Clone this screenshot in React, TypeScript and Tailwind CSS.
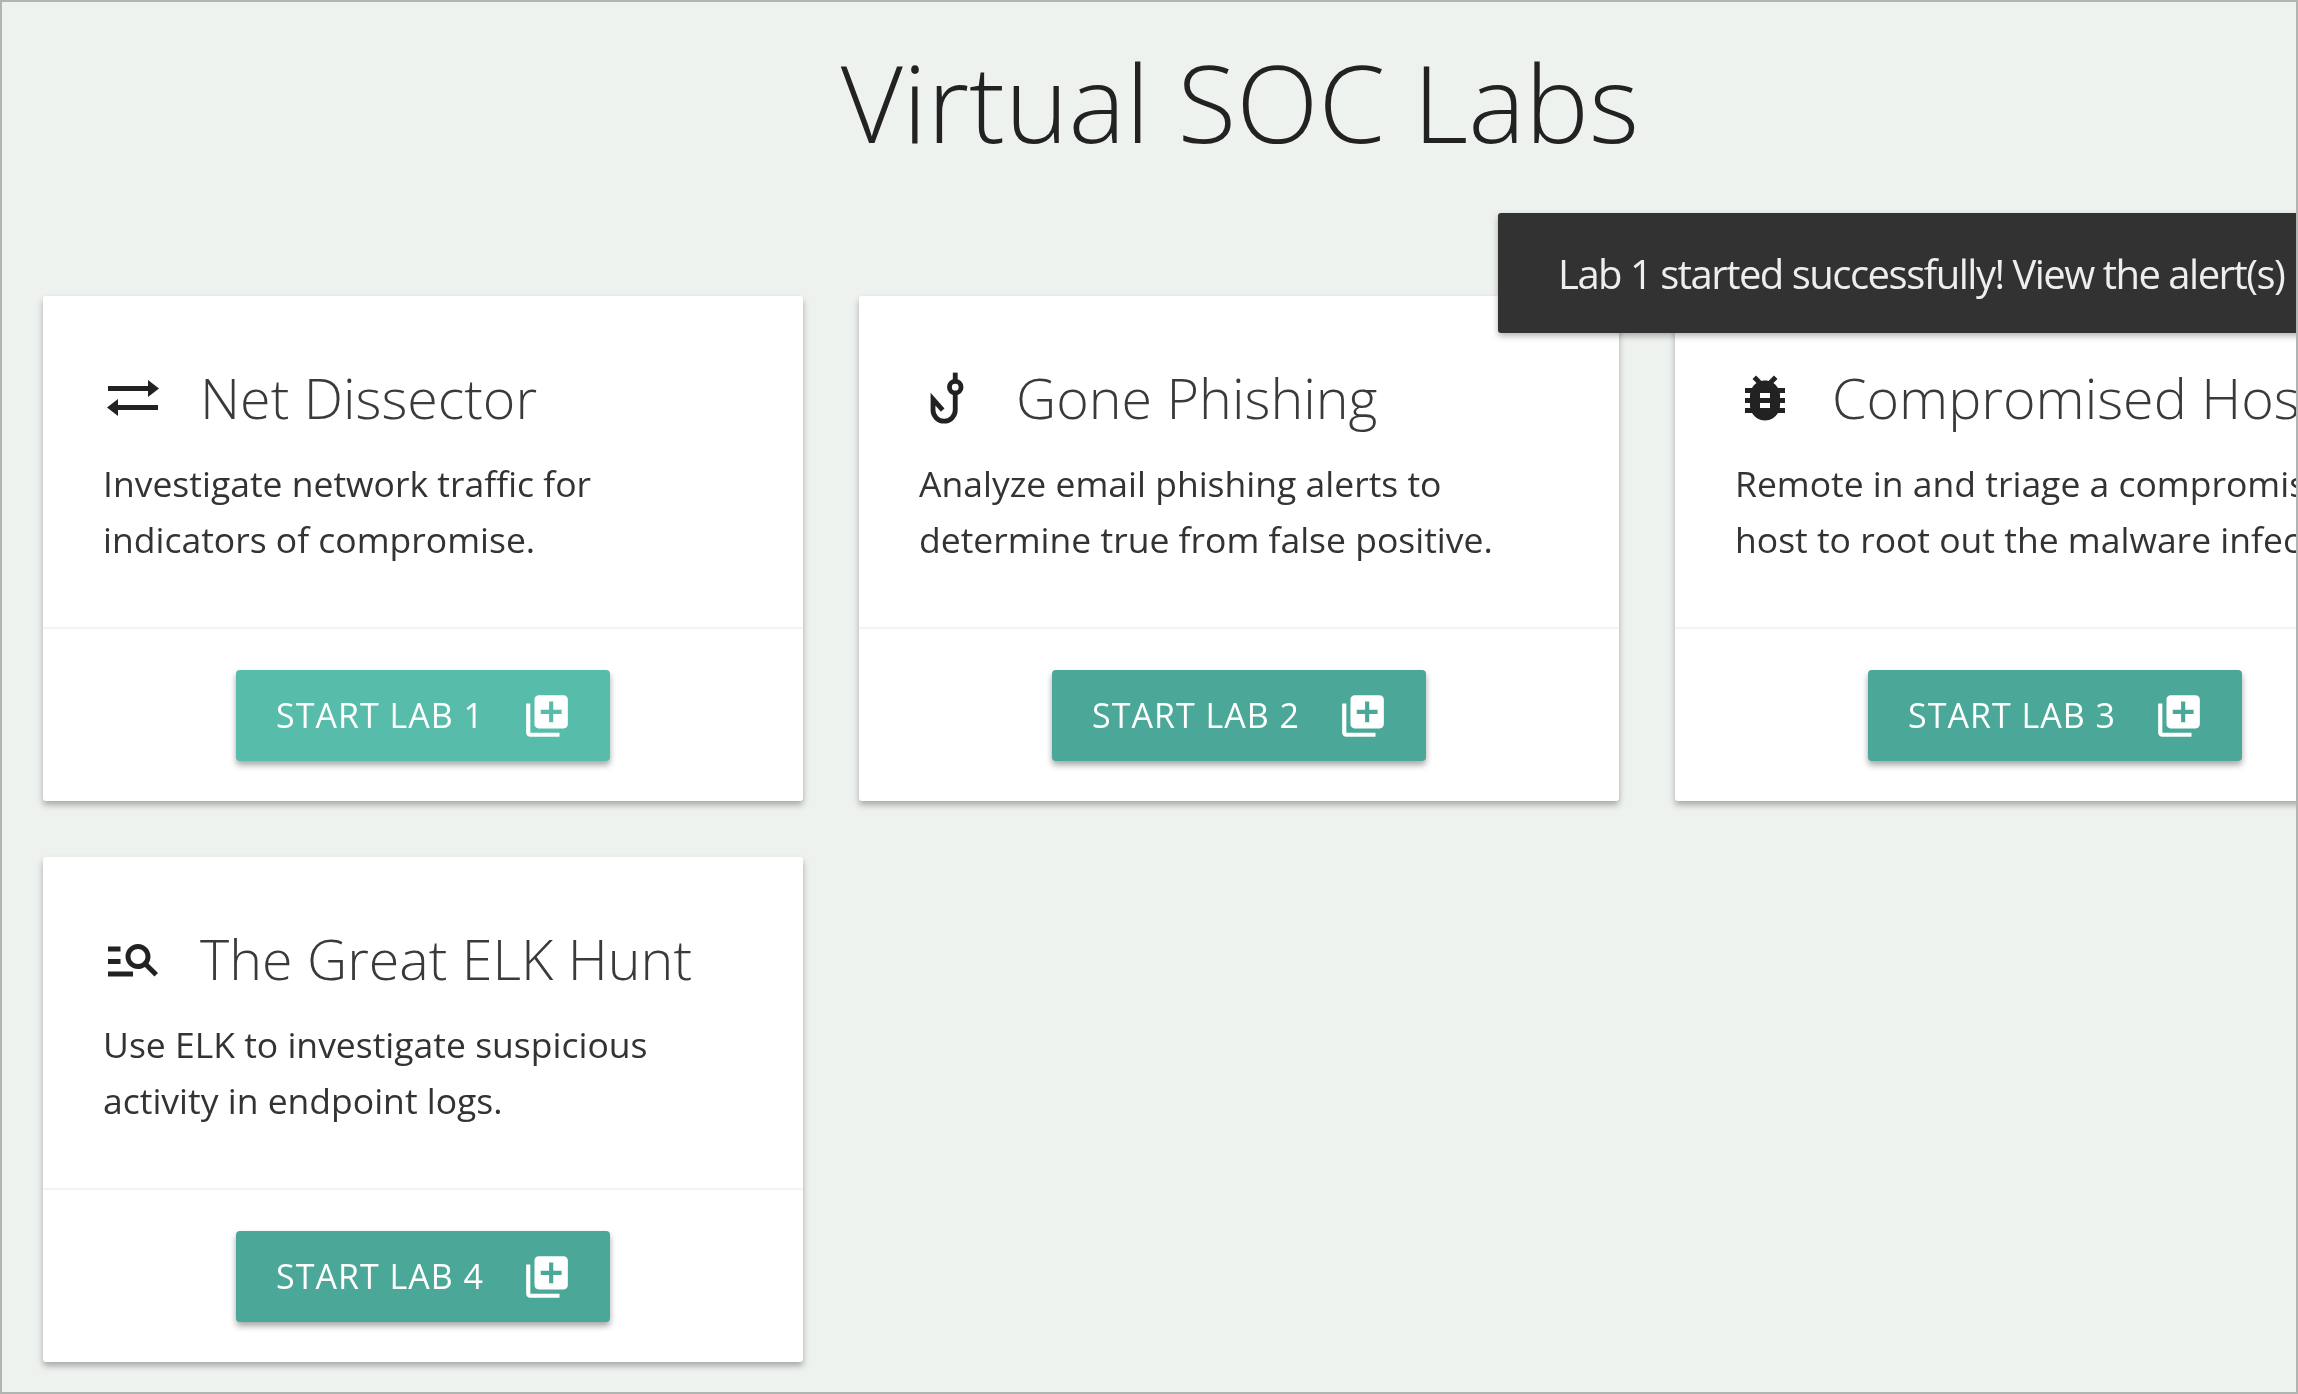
import React from 'react';
import { MdBugReport, MdLibraryAdd, MdManageSearch } from 'react-icons/md';

// two thin opposed arrows, swap_horiz staggers them so it doesn't match
const SwapIcon = () => (
    <svg viewBox="0 0 52 40" className="ml-[4px] w-[52px] h-[40px]" fill="currentColor">
        <rect x="1" y="8" width="42" height="5" />
        <path d="M41 2l11 8.5L41 19z" />
        <rect x="9" y="27" width="42" height="5" />
        <path d="M11 21L0 29.5 11 38z" />
    </svg>
);

// mdi "hook" with a stem over the eye, the icon set has no match for it
const HookIcon = () => (
    <svg viewBox="0 0 24 24" className="w-[58px] h-[58px]" fill="none" stroke="currentColor" strokeWidth="2">
        <path d="M15 1.5v3.5" />
        <circle cx="15" cy="7.5" r="2.4" />
        <path d="M15 10v7a4.6 4.6 0 0 1-9.2 0v-4.5l4 4.5" />
    </svg>
);

interface Lab {
    title: string;
    lines: string[];
    icon: React.ReactNode;
    label: string;
    hovered?: boolean;
}

const row1: Lab[] = [
    {
        title: 'Net Dissector',
        lines: ['Investigate network traffic for', 'indicators of compromise.'],
        icon: <SwapIcon />,
        label: 'START LAB 1',
        hovered: true,
    },
    {
        title: 'Gone Phishing',
        lines: ['Analyze email phishing alerts to', 'determine true from false positive.'],
        icon: <HookIcon />,
        label: 'START LAB 2',
    },
    {
        title: 'Compromised Host',
        lines: ['Remote in and triage a compromised', 'host to root out the malware infection.'],
        icon: <MdBugReport className="w-[60px] h-[60px]" />,
        label: 'START LAB 3',
    },
];

const row2: Lab[] = [
    {
        title: 'The Great ELK Hunt',
        lines: ['Use ELK to investigate suspicious', 'activity in endpoint logs.'],
        icon: <MdManageSearch className="w-[60px] h-[60px]" />,
        label: 'START LAB 4',
    },
];

const LabCard: React.FC<{ lab: Lab }> = ({ lab }) => (
    <div className="w-[760px] h-[505px] shrink-0 flex flex-col bg-white rounded-[3px] shadow-[0_4px_6px_rgba(0,0,0,0.3)]">
        <div className="h-[333px] px-[60px] pt-[66px] border-b-2 border-[#f3f4f3]">
            <div className="h-[72px] flex items-center">
                <div className="w-[97px] flex items-center justify-start text-[#222]">{lab.icon}</div>
                <h2 className="text-[55.6px] font-light leading-none text-[#3a3a3a] whitespace-nowrap">{lab.title}</h2>
            </div>
            <p className="mt-[21px] text-[35.5px] leading-[56px] text-[#333] whitespace-nowrap">
                {lab.lines[0]}
                <br />
                {lab.lines[1]}
            </p>
        </div>
        <div className="flex-1 flex justify-center pt-[41px]">
            <button
                className={`h-[91px] flex items-center gap-[38px] pl-[40px] pr-[38px] rounded-[4px] text-white text-[34px] tracking-[1px] whitespace-nowrap shadow-[0_4px_6px_rgba(0,0,0,0.35)] ${
                    lab.hovered ? 'bg-[#57bcaa]' : 'bg-[#4ba898]'
                }`}
            >
                {lab.label}
                <MdLibraryAdd className="w-[50px] h-[50px]" />
            </button>
        </div>
    </div>
);

export default function App() {
    return (
        <div className="relative w-[2298px] h-[1394px] overflow-hidden border-2 border-[#b0b5b2] bg-[#eef2ef] font-['Open_Sans',sans-serif] blur-[0.5px]">
            {/* page is wider than the window, the heading centres on the full width */}
            <h1 className="w-[2476px] pt-[34px] h-[294px] text-center text-[107.5px] leading-[130px] font-light text-[#222]">
                Virtual SOC Labs
            </h1>
            <div className="flex flex-col gap-[56px] pl-[41px]">
                <div className="flex gap-[56px]">
                    {row1.map(lab => (
                        <LabCard key={lab.label} lab={lab} />
                    ))}
                </div>
                <div className="flex gap-[56px]">
                    {row2.map(lab => (
                        <LabCard key={lab.label} lab={lab} />
                    ))}
                </div>
            </div>

            {/* Toast, runs off the right edge */}
            <div className="absolute left-[1496px] top-[211px] w-[900px] h-[120px] flex items-center pl-[60px] pt-[2px] rounded-[3px] bg-[#323232] text-[#eee] text-[40px] tracking-[-1.5px] whitespace-nowrap shadow-[0_3px_6px_rgba(0,0,0,0.3)]">
                Lab 1 started successfully! View the alert(s)
            </div>
        </div>
    );
}
